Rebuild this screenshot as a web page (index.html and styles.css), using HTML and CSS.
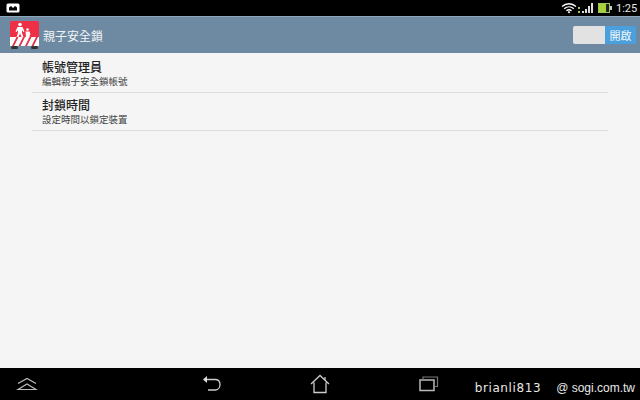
FILE: index.html
```html
<!DOCTYPE html>
<html lang="zh-Hant">
<head>
    <meta charset="UTF-8">
    <meta name="viewport" content="width=device-width, initial-scale=1.0">
    <title>親子安全鎖</title>
    <link rel="stylesheet" href="styles.css">
</head>
<body>
    <div class="screen">
        <div class="status-bar">
            <svg class="status-left" width="14" height="10" viewBox="0 0 14 10">
                <rect x="0.5" y="0.5" width="13" height="9" rx="1.5" fill="#fff"/>
                <path d="M3 7.5V4.5L5 3l2 2 2-2 2 1.5v3z" fill="#000"/>
            </svg>
            <div class="status-right">
                <svg width="17" height="12" viewBox="0 0 17 12">
                    <path d="M1 4.500C5 .8 11 .8 15 4.500M3.200 6.700C6 4.200 10 4.200 12.800 6.700M5.400 8.800C7 7.500 9 7.500 10.600 8.800" fill="none" stroke="#fff" stroke-width="1.300"/>
                    <path d="M6.600 10 8 8.900 9.400 10 8 11.500z" fill="#fff"/>
                </svg>
                <svg class="signal" width="16" height="12" viewBox="0 0 16 12">
                    <rect x="0" y="5" width="2" height="2" fill="#9fc75a"/>
                    <rect x="0" y="9" width="2" height="2" fill="#9fc75a"/>
                    <rect x="4" y="9" width="2" height="2" fill="#ddd"/>
                    <rect x="7" y="7" width="2" height="4" fill="#ddd"/>
                    <rect x="10" y="4" width="2" height="7" fill="#ddd"/>
                    <rect x="13" y="1" width="2" height="10" fill="#ddd"/>
                </svg>
                <svg class="battery" width="14" height="10" viewBox="0 0 14 10">
                    <rect x="0.500" y="0.500" width="11" height="9" fill="#222" stroke="#9fc75a"/>
                    <rect x="1" y="1" width="7" height="8" fill="#a8d23c"/>
                    <rect x="12" y="3" width="2" height="4" fill="#ccc"/>
                </svg>
                <span class="clock">1:25</span>
            </div>
        </div>

        <div class="action-bar">
            <svg class="app-icon" width="32" height="32" viewBox="0 0 32 32">
                <rect x="1" y="2" width="29" height="18" rx="2" fill="#ee2f45"/>
                <circle cx="11" cy="5.500" r="1.800" fill="#fff"/>
                <path d="M8.500 8h5l2 4.500-1.200.6-1.300-2V14l1.500 4h-2L11 14.500 9.500 18h-2L9 14v-3l-1.300 2-1.200-.6z" fill="#fff"/>
                <circle cx="18.500" cy="10.500" r="1.300" fill="#fff"/>
                <path d="M16.500 12.500h4l1 3-.8.4V18h-3.700z" fill="#fff"/>
                <rect x="1" y="18" width="29" height="9" fill="#fff"/>
                <path d="M3 27l4.500-9h2L5 27zM9.500 27l4.500-9h2l-4.500 9zM16 27l4.500-9h2L18 27zM22.500 27l4.500-9h2l-4.500 9z" fill="#e23048"/>
                <rect x="2" y="27" width="7" height="3" rx="1.500" fill="#333"/>
                <rect x="22" y="27" width="7" height="3" rx="1.500" fill="#333"/>
            </svg>
            <span class="app-title">親子安全鎖</span>
            <div class="toggle">
                <span class="toggle-off"></span>
                <span class="toggle-on">開啟</span>
            </div>
        </div>

        <div class="content">
            <div class="list">
                <div class="list-item">
                    <div class="item-title">帳號管理員</div>
                    <div class="item-sub">編輯親子安全鎖帳號</div>
                </div>
                <div class="list-item">
                    <div class="item-title">封鎖時間</div>
                    <div class="item-sub">設定時間以鎖定裝置</div>
                </div>
            </div>
        </div>

        <div class="nav-bar">
            <svg class="nav-icon nav-up" width="22" height="14" viewBox="0 0 22 14">
                <path d="M2 6.500 11 1.500l9 5M2 12.500h18L11 7z" fill="none" stroke="#bbb" stroke-width="1.200"/>
            </svg>
            <svg class="nav-icon nav-back" width="20" height="18" viewBox="0 0 20 18">
                <path d="M2 4.500h11c3 0 5 2 5 5s-2 5.500-5 5.500H6" fill="none" stroke="#ccc" stroke-width="1.300"/>
                <path d="M5 1v7L1 4.500z" fill="#ddd"/>
            </svg>
            <svg class="nav-icon nav-home" width="20" height="20" viewBox="0 0 20 20">
                <path d="M1 10 10 1.500 19 10M4 8.500V18.500h12V8.500M15 3v3" fill="none" stroke="#ccc" stroke-width="1.300"/>
            </svg>
            <svg class="nav-icon nav-recent" width="20" height="16" viewBox="0 0 20 16">
                <rect x="1" y="4" width="14" height="10.500" fill="none" stroke="#bbb" stroke-width="1.500"/>
                <path d="M4 3.500V1h14.500v9.500H16" fill="none" stroke="#777" stroke-width="1.200"/>
            </svg>
            <div class="watermark">
                <span class="wm-user">brianli813</span>
                <span class="wm-site">@ sogi.com.tw</span>
            </div>
        </div>
    </div>
</body>
</html>
```

FILE: styles.css
```css
html, body {
    margin: 0;
    padding: 0;
    background-color: #000;
}
.screen {
    width: 640px;
    height: 400px;
    display: flex;
    flex-direction: column;
    position: relative;
    overflow: hidden;
    font-family: "Noto Sans CJK TC", "Liberation Sans", sans-serif;
}
.status-bar {
    height: 16px;
    background-color: #000;
    display: flex;
    align-items: center;
    justify-content: space-between;
    padding: 0 4px 0 6px;
}
.status-left {
    display: block;
}
.status-right {
    display: flex;
    align-items: center;
}
.battery {
    margin-left: 4px;
}
.clock {
    margin-left: 4px;
    width: 20px;
    color: #e6e6e6;
    font-size: 11px;
    font-family: Roboto, "Liberation Sans", sans-serif;
}
.action-bar {
    height: 36px;
    border-top: 1px solid #8fa6b8;
    background-color: #6e8aa2;
    display: flex;
    align-items: center;
    padding: 0 4px 0 9px;
}
.app-icon {
    display: block;
}
.app-title {
    margin-left: 2px;
    color: #f0f3f5;
    font-size: 12px;
    flex: 1;
}
.toggle {
    display: flex;
    height: 18px;
    border-radius: 2px;
    overflow: hidden;
}
.toggle-off {
    width: 32px;
    background-color: #e2e2e2;
}
.toggle-on {
    width: 31px;
    background-color: #4a9fdc;
    color: #f4f9fd;
    font-size: 11px;
    line-height: 18px;
    text-align: center;
}
.content {
    height: 313px;
    background-color: #f5f5f5;
    padding: 2px 32px 0;
}
.list-item {
    height: 37px;
    padding-left: 10px;
    border-bottom: 1px solid #dcdcdc;
}
.item-title {
    padding-top: 3px;
    color: #222;
    font-size: 12px;
    line-height: 17px;
    font-weight: 500;
}
.item-sub {
    color: #444;
    font-size: 9.5px;
    line-height: 13px;
}
.nav-bar {
    height: 32px;
    background-color: #000;
    display: flex;
    align-items: center;
}
.nav-icon {
    display: block;
}
.nav-up {
    margin-left: 16px;
}
.nav-back {
    margin-left: 164px;
}
.nav-home {
    margin-left: 88px;
}
.nav-recent {
    margin-left: 89px;
}
.watermark {
    position: absolute;
    right: 5px;
    bottom: 5px;
    display: flex;
    align-items: baseline;
    color: #e8e8e8;
}
.wm-user {
    font-family: "DejaVu Sans", sans-serif;
    font-size: 12px;
    letter-spacing: 0.6px;
}
.wm-site {
    margin-left: 15px;
    font-family: "Liberation Sans", sans-serif;
    font-size: 12px;
}
```
